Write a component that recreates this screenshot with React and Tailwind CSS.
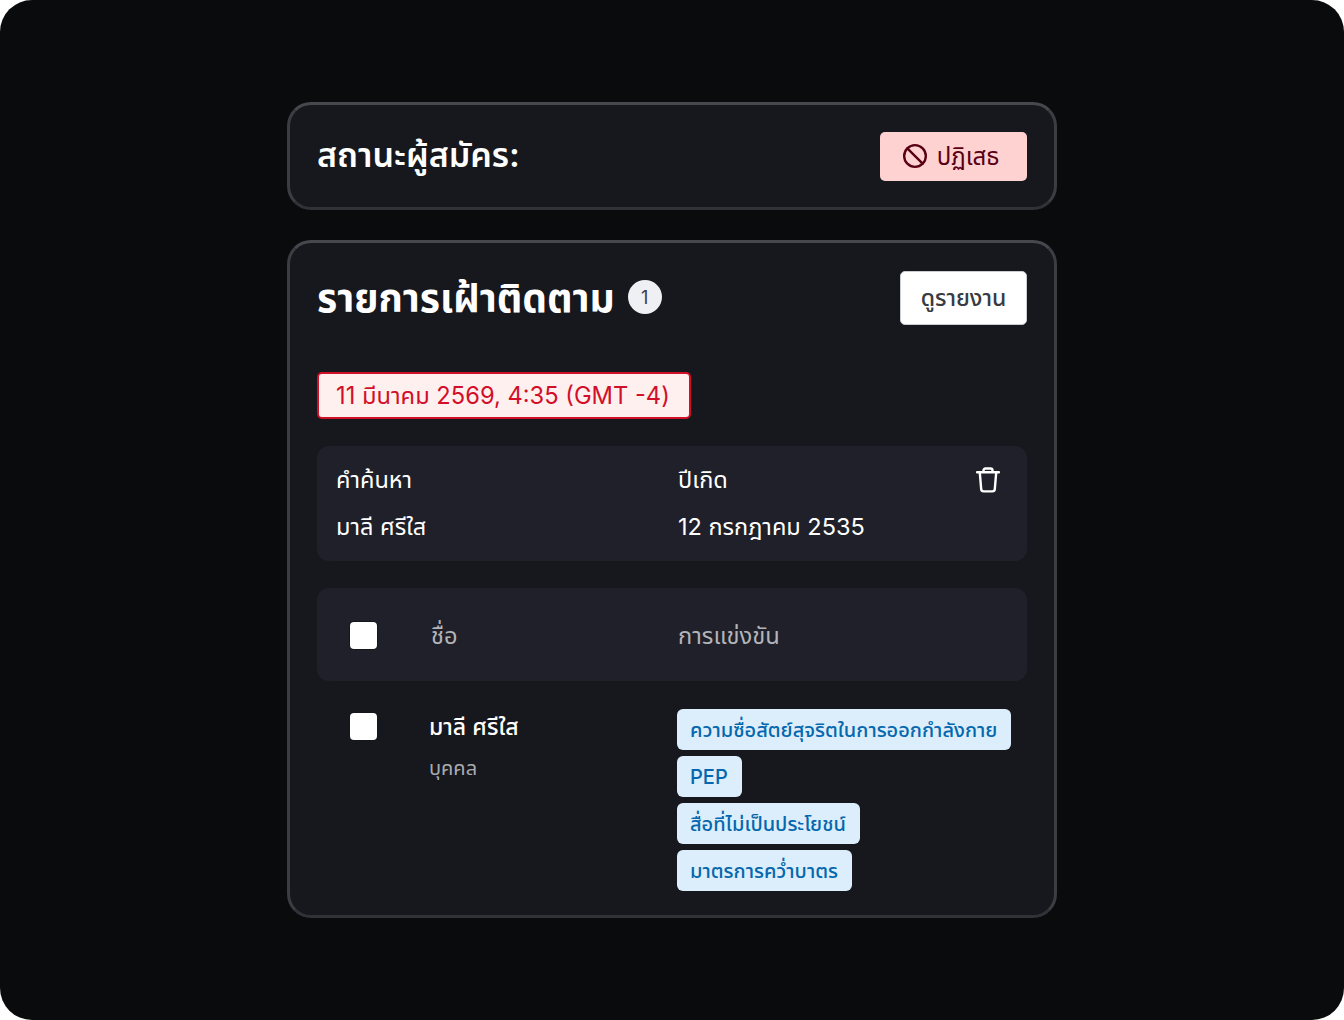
import { Ban } from 'lucide-react';

const tags = ['ความซื่อสัตย์สุจริตในการออกกำลังกาย', 'PEP', 'สื่อที่ไม่เป็นประโยชน์', 'มาตรการคว่ำบาตร'];

function Checkbox() {
  return <div className="w-[27px] h-[27px] rounded-[4px] bg-white shadow-[0_0_0_1px_#14161b]" />;
}

function TrashIcon() {
  return (
    <svg width="24" height="26" viewBox="0 0 24 26" fill="none" stroke="currentColor" strokeWidth="2.4" strokeLinecap="round" strokeLinejoin="round" className="absolute right-[27px] top-[21px] text-white">
      <path d="M1 5.2h22" />
      <path d="M7.5 4.6V3.4c0-1 .8-1.9 1.9-1.9h5.2c1.1 0 1.9.9 1.9 1.9v1.2" />
      <path d="M3.8 5.6l1.4 16.6c.1 1.2 1.1 2.2 2.4 2.2h8.8c1.3 0 2.3-1 2.4-2.2l1.4-16.6" />
    </svg>
  );
}

export default function App() {
  return (
    <div className="w-[1344px] h-[1020px] bg-white font-['Inter','Noto_Sans_Thai','Noto_Sans','Liberation_Sans',sans-serif]">
      <div className="w-full h-full rounded-[32px] bg-[#0a0b0d] pt-[102px] flex flex-col items-center gap-[30px]">
        {/* สถานะ */}
        <section className="w-[770px] h-[108px] rounded-[24px] border-[3px] border-x-[#3c3d42] border-t-[#47484d] border-b-[#313237] bg-[#17181d] px-[27px] flex items-center justify-between">
          <h2 className="mb-[2px] text-[34px] leading-[40px] font-semibold text-white">สถานะผู้สมัคร:</h2>
          <div className="w-[147px] h-[49px] pr-[6px] rounded-[5px] bg-[#ffd2d2] flex items-center justify-center gap-[9px] text-[#5a0014] text-[24px]">
            <Ban size={26} strokeWidth={2.2} />
            <span className="pt-[1px]">ปฏิเสธ</span>
          </div>
        </section>

        {/* รายการเฝ้าติดตาม */}
        <section className="w-[770px] h-[678px] rounded-[24px] border-[3px] border-x-[#3c3d42] border-t-[#47484d] border-b-[#313237] bg-[#17181d] px-[27px] pt-[28px]">
          <div className="flex items-center justify-between h-[54px]">
            <div className="flex items-center gap-[13px]">
              <h2 className="text-[39px] leading-[44px] font-bold text-white">รายการเฝ้าติดตาม</h2>
              <span className="mb-[2px] w-[34px] h-[34px] rounded-full bg-[#eef0f4] text-[#3a3d45] text-[18px] flex items-center justify-center">1</span>
            </div>
            <div className="w-[127px] h-[54px] rounded-[5px] bg-white border border-[#c9ccd3] text-[#383b42] text-[23px] font-medium flex items-center justify-center">ดูรายงาน</div>
          </div>

          <div className="mt-[47px] w-fit h-[47px] pt-[1px] rounded-[5px] border-2 border-[#d20f28] bg-[#fff0f0] text-[#d20f28] text-[23.7px] pl-[17px] pr-[19px] flex items-center">
            11 มีนาคม 2569, 4:35 (GMT -4)
          </div>

          <div className="mt-[27px] h-[115px] rounded-[12px] bg-[#1f2029] pl-[19px] pt-[17px] relative grid grid-cols-[342px_1fr] text-white text-[23.5px] leading-[34px]">
            <div>
              <div>คำค้นหา</div>
              <div className="mt-[13px]">มาลี ศรีใส</div>
            </div>
            <div>
              <div>ปีเกิด</div>
              <div className="mt-[13px]">12 กรกฎาคม 2535</div>
            </div>
            <TrashIcon />
          </div>

          <div className="mt-[27px] h-[93px] pt-[1px] rounded-[12px] bg-[#1f2029] grid grid-cols-[114px_247px_1fr] items-center text-[#b2b4ba] text-[23.7px]">
            <div className="pl-[33px]"><Checkbox /></div>
            <div className="pt-[1px]">ชื่อ</div>
            <div className="pt-[1px]">การแข่งขัน</div>
          </div>

          <div className="mt-[28px] grid grid-cols-[112px_248px_1fr]">
            <div className="pl-[33px] pt-[4px]"><Checkbox /></div>
            <div className="pt-[1px]">
              <div className="text-white text-[23px] leading-[34px] font-medium">มาลี ศรีใส</div>
              <div className="mt-[9px] text-[#a9abb2] text-[20px] leading-[30px]">บุคคล</div>
            </div>
            <div className="flex flex-col items-start gap-[6px]">
              {tags.map((t) => (
                <span key={t} className="h-[41px] pt-[1px] rounded-[6px] bg-[#dceefb] text-[#0568ae] text-[20px] font-medium pl-[13px] pr-[14px] flex items-center">{t}</span>
              ))}
            </div>
          </div>
        </section>
      </div>
    </div>
  );
}
